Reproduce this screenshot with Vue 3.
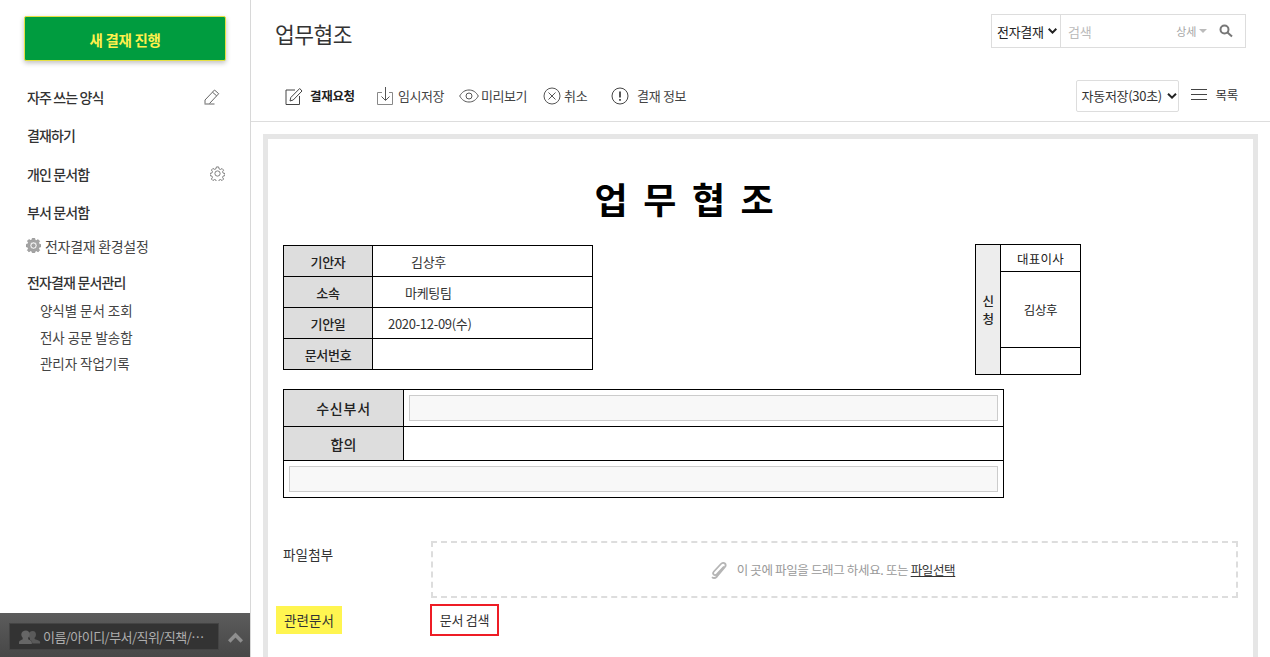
<script setup>
const nav = [
  { label: '자주 쓰는 양식', icon: 'pen' },
  { label: '결재하기' },
  { label: '개인 문서함', icon: 'gear' },
  { label: '부서 문서함' }
]
const subs = ['양식별 문서 조회', '전사 공문 발송함', '관리자 작업기록']
const info = [
  ['기안자', '김상후', 'c1'],
  ['소속', '마케팅팀', 'c2'],
  ['기안일', '2020-12-09(수)', 'c3'],
  ['문서번호', '', '']
]
</script>

<template>
  <div class="app">
    <aside class="side">
      <button class="new-btn">새 결재 진행</button>
      <nav class="nav">
        <div v-for="n in nav" :key="n.label" class="nav-item">
          <span>{{ n.label }}</span>
          <svg v-if="n.icon === 'pen'" class="pen" width="16" height="16" viewBox="0 0 16 16" fill="none" stroke="#666" stroke-width="1">
            <path d="M.5 15h10M1 14.500V11L10.500 1l4.200 3.700L5.500 14.500M8.500 3.200l4.200 3.700" />
          </svg>
          <svg v-if="n.icon === 'gear'" class="gear" width="15" height="15" viewBox="0 0 16 16" fill="none" stroke="#777" stroke-width="1">
            <circle cx="8" cy="8" r="2.800" />
            <path d="M6.800 1h2.400l.4 2 1.500.7 1.800-1 1.600 1.700-1.100 1.700.6 1.500 2 .4v2.200l-2 .5-.6 1.400 1.100 1.800-1.600 1.600-1.800-1.100-1.500.7-.4 1.900H6.800l-.4-1.900-1.500-.7-1.800 1.100-1.600-1.600 1.100-1.800-.6-1.400-2-.5V7.900l2-.4.6-1.500L1.500 4.300l1.600-1.700 1.800 1 1.500-.7z" />
          </svg>
        </div>
      </nav>
      <div class="env">
        <svg width="15" height="15" viewBox="0 0 16 16" fill="#a4a4a4" stroke="#888" stroke-width=".5">
          <path fill-rule="evenodd" d="M6.800 0h2.400l.4 2 1.500.7 1.800-1 1.700 1.700-1.100 1.700.6 1.500 1.900.4v2.400l-1.900.5-.6 1.400 1.100 1.800-1.700 1.700-1.800-1.100-1.500.6-.4 1.900H6.800l-.4-1.900-1.500-.6-1.800 1.100-1.700-1.700 1.100-1.800-.6-1.400L0 9.200V6.800l1.900-.4.6-1.500-1.100-1.700 1.700-1.700 1.800 1 1.500-.7zM8 4.300a3.700 3.700 0 1 0 0 7.400 3.700 3.700 0 0 0 0-7.400zM8 6a2 2 0 1 1 0 4 2 2 0 0 1 0-4z" />
        </svg>
        <span>전자결재 환경설정</span>
      </div>
      <div class="nav-item manage">전자결재 문서관리</div>
      <div class="subs">
        <div v-for="s in subs" :key="s" class="sub">{{ s }}</div>
      </div>
      <div class="side-foot">
        <div class="who">
          <svg width="22" height="16" viewBox="0 0 24 16" fill="#5a5a5a">
            <path d="M15 1.500c2.300 0 3.500 1.500 3.500 3.700 0 1.500-.6 2.800-1.500 3.600v1.400c1 .8 5.500 1.200 6 3.300v1.500H14.500c0-2-1-3-2.500-3.800V9.500c-1-1.200-1.500-2.600-1.500-4.300 0-2.200 2-3.700 4.500-3.700z" />
            <path d="M7.500 1C10 1 11.500 2.700 11.500 5c0 1.600-.6 3-1.500 3.800v1.700c1 .8 4 1.400 4 3.500v1.500H0V14c0-2.100 3-2.700 4-3.500V8.800C3.100 8 2.500 6.600 2.500 5c0-2.300 2.500-4 5-4z" fill="#666" />
          </svg>
          <span>이름/아이디/부서/직위/직책/⋯</span>
        </div>
        <svg class="chev" width="15" height="11" viewBox="0 0 15 11" fill="none" stroke="#8f8f8f" stroke-width="3.500">
          <path d="M1.200 9.500L7.500 3l6.300 6.500" />
        </svg>
      </div>
    </aside>

    <main class="main">
      <header class="head">
        <div class="title-row">
          <h1>업무협조</h1>
          <div class="search">
            <div class="search-sel">전자결재<svg width="9" height="6" viewBox="0 0 9 6" fill="none" stroke="#222" stroke-width="2"><path d="M.7.8l3.800 3.800L8.300.8" /></svg></div>
            <div class="search-in">
              <span class="ph">검색</span>
              <span class="more">상세<i></i></span>
              <svg width="14" height="14" viewBox="0 0 14 14" fill="none" stroke="#777" stroke-width="2"><circle cx="5.500" cy="5.500" r="4" /><path d="M8.500 8.500l4.500 4" /></svg>
            </div>
          </div>
        </div>
        <div class="tool-row">
          <div class="tools">
            <div class="tool strong t1">
              <svg width="18" height="18" viewBox="0 0 18 18" fill="none" stroke="#444"><path d="M14.500 9v8.500H1V3h9" /><path d="M5 14l.8-3.500L14.700 1.500 17 4 8.200 13z" /></svg>
              <span>결재요청</span>
            </div>
            <div class="tool t2">
              <svg width="20" height="20" viewBox="0 0 20 20" fill="none" stroke="#555"><path d="M6 6.500H1.500v12h15v-12H13" stroke="#888" /><path d="M9.500 1v13M5.500 10.500l4 4 4-4" /></svg>
              <span>임시저장</span>
            </div>
            <div class="tool t3">
              <svg width="20" height="14" viewBox="0 0 20 14" fill="none" stroke="#555"><path d="M.7 7C3 3 6 1 10 1s7 2 9.300 6c-2.300 4-5.300 6-9.300 6S3 11 .7 7z" /><circle cx="10" cy="7" r="3" /></svg>
              <span>미리보기</span>
            </div>
            <div class="tool t4">
              <svg width="18" height="18" viewBox="0 0 18 18" fill="none" stroke="#555"><circle cx="9" cy="9" r="8" /><path d="M5.500 5.500l7 7M12.500 5.500l-7 7" /></svg>
              <span>취소</span>
            </div>
            <div class="tool t5">
              <svg width="18" height="18" viewBox="0 0 18 18" fill="none" stroke="#444"><circle cx="9" cy="9" r="8" /><path d="M9 4.500v6" stroke-width="1.800" /><path d="M9 12v1.800" stroke-width="1.800" /></svg>
              <span>결재 정보</span>
            </div>
          </div>
          <div class="tools-right">
            <div class="autosave">자동저장(30초)<svg width="10" height="6" viewBox="0 0 10 6" fill="none" stroke="#222" stroke-width="2"><path d="M1 .8l4 3.800L9 .8" /></svg></div>
            <div class="list-btn">
              <svg width="16" height="12" viewBox="0 0 16 12" stroke="#444" fill="none"><path d="M0 .5h16M0 5.500h16M0 10.500h16" /></svg>
              <span>목록</span>
            </div>
          </div>
        </div>
      </header>

      <div class="body">
        <section class="doc">
          <h2>업 무 협 조</h2>
          <div class="top-tables">
            <table class="info">
              <tbody>
                <tr v-for="r in info" :key="r[0]">
                  <th>{{ r[0] }}</th>
                  <td><span :class="r[2]">{{ r[1] }}</span></td>
                </tr>
              </tbody>
            </table>
            <table class="sign">
              <tbody>
                <tr><th rowspan="3">신<br />청</th><td class="s1">대표이사</td></tr>
                <tr><td class="s2">김상후</td></tr>
                <tr><td class="s3"></td></tr>
              </tbody>
            </table>
          </div>
          <table class="recv">
            <tbody>
              <tr class="r1"><th>수신부서</th><td><div class="field"></div></td></tr>
              <tr class="r2"><th>합의</th><td></td></tr>
              <tr class="r3"><td colspan="2"><div class="field"></div></td></tr>
            </tbody>
          </table>
          <div class="attach">
            <label>파일첨부</label>
            <div class="drop">
              <svg width="16" height="18" viewBox="0 0 16 18" fill="none" stroke="#b5b5b5" stroke-width="1.800"><path d="M13.500 5.500L6.200 13.300c-1 1-2.300 1-3 .2-.8-.8-.7-2 .2-3l7-7.500c1.300-1.400 3-1.500 4-.5s.8 2.700-.4 4L6.500 15.500c-1.700 1.700-3.700 1.800-5 .6" transform="translate(-.5 0)" /></svg>
              <span>이 곳에 파일을 드래그 하세요. 또는 <u>파일선택</u></span>
            </div>
          </div>
          <div class="rel">
            <label>관련문서</label>
            <div class="rel-btn">문서 검색</div>
          </div>
        </section>
      </div>
    </main>
  </div>
</template>

<style>
html, body { margin: 0; height: 100%; overflow: hidden; background: #fff; }
</style>

<style scoped>
.app {
  display: flex;
  width: 1270px;
  height: 657px;
  overflow: hidden;
  font-family: "Noto Sans CJK KR", "Noto Sans", sans-serif;
  font-size: 13px;
  color: #333;
  letter-spacing: -0.3px;
}
.side {
  position: relative;
  width: 250px;
  flex: none;
  border-right: 1px solid #d8d8d8;
  padding-top: 16px;
}
.new-btn {
  display: block;
  width: 202px;
  height: 45px;
  margin-left: 24px;
  padding: 2px 0 0;
  background: #009c3f;
  border: 1px solid #e6e042;
  border-radius: 2px;
  color: #fff04d;
  font: bold 14.500px "Noto Sans CJK KR", sans-serif;
  letter-spacing: -0.3px;
  box-shadow: 0 2px 5px rgba(0, 0, 0, .25);
}
.nav { margin-top: 17px; }
.nav-item {
  display: flex;
  justify-content: space-between;
  align-items: center;
  height: 38.300px;
  padding-left: 27px;
  font-size: 14px;
  font-weight: 500;
  color: #333;
  letter-spacing: -0.9px;
}
.pen { margin-right: 30px; }
.gear { margin-right: 25px; }
.env {
  display: flex;
  align-items: center;
  gap: 4px;
  height: 29px;
  padding-left: 26px;
  font-size: 14px;
  color: #444;
}
.manage { margin-top: 4px; height: 36px; letter-spacing: -0.85px; }
.subs { padding-left: 40px; margin-top: -3px; }
.sub { height: 26.500px; line-height: 26.500px; font-size: 13.500px; color: #444; letter-spacing: -0.05px; }
.side-foot {
  position: absolute;
  left: 0;
  bottom: 0;
  width: 250px;
  height: 44px;
  background: linear-gradient(#5c5c5c, #474747);
  display: flex;
  align-items: center;
}
.who {
  display: flex;
  align-items: center;
  gap: 2px;
  width: 210px;
  height: 27px;
  margin: 3px 0 0 9px;
  padding-left: 9px;
  box-sizing: border-box;
  background: #333;
  border: 1px solid #444;
  color: #aeaeae;
  font-size: 13px;
  letter-spacing: -0.55px;
  white-space: nowrap;
}
.chev { margin: 5px 0 0 9px; }

.main { flex: 1; min-width: 0; }
.head { height: 121px; border-bottom: 1px solid #ddd; }
.title-row {
  display: flex;
  justify-content: space-between;
  height: 71px;
  padding: 14px 24px 0 24px;
  box-sizing: border-box;
}
h1 { margin: 5px 0 0; font-size: 21.500px; font-weight: 400; color: #333; line-height: 30px; letter-spacing: -0.5px; }
.search {
  display: flex;
  width: 255px;
  height: 34px;
  border: 1px solid #ddd;
  box-sizing: border-box;
}
.search-sel {
  display: flex;
  align-items: center;
  gap: 4px;
  width: 69px;
  padding-left: 5px;
  box-sizing: border-box;
  border-right: 1px solid #ddd;
  color: #222;
}
.search-in { flex: 1; display: flex; align-items: center; padding: 0 12px 0 7px; color: #bbb; }
.ph { flex: 1; font-size: 13px; }
.more { font-size: 11px; color: #a5a5a5; margin-right: 12px; display: flex; align-items: center; gap: 3px; }
.more i { border: 4px solid transparent; border-top: 4px solid #bbb; border-bottom: 0; }
.tool-row { display: flex; justify-content: space-between; padding: 0 32px 0 34px; height: 49px; align-items: flex-start; }
.tools { display: flex; height: 49px; align-items: center; }
.tool { display: flex; align-items: center; color: #444; font-size: 13px; }
.tool.strong { font-weight: 700; color: #222; font-size: 12.500px; }
.t1 { gap: 7px; width: 91px; }
.t2 { gap: 2px; width: 83px; letter-spacing: -0.5px; }
.t3 { gap: 2px; width: 84px; letter-spacing: -0.5px; }
.t4 { gap: 3px; width: 68px; }
.t5 { gap: 8px; }
.tools-right { display: flex; align-items: center; height: 49px; }
.autosave {
  display: flex;
  align-items: center;
  gap: 5px;
  width: 103px;
  height: 32px;
  box-sizing: border-box;
  padding-left: 5px;
  border: 1px solid #ddd;
  border-radius: 2px;
  color: #333;
  white-space: nowrap;
}
.list-btn { display: flex; align-items: center; gap: 9px; margin: -2px 0 0 12px; font-size: 12.500px; color: #333; }

.body { padding: 12px 12px 0 12px; }
.doc {
  width: 995px;
  height: 540px;
  box-sizing: border-box;
  border: 5px solid #e6e6e6;
  padding: 0 15px;
}
h2 {
  margin: 0;
  padding-top: 35px;
  width: 806px;
  height: 105px;
  box-sizing: border-box;
  text-align: center;
  font-size: 36px;
  font-weight: 700;
  line-height: 48px;
  color: #000;
  font-family: "Noto Sans CJK KR", sans-serif;
  letter-spacing: 3.700px;
}
.top-tables { display: flex; align-items: flex-start; height: 145px; }
table { border-collapse: collapse; table-layout: fixed; color: #222; }
.info { width: 310px; margin-top: 1px; }
.info th, .info td { border: 1px solid #000; height: 31px; padding: 0; box-sizing: border-box; font-size: 13px; }
.info th { width: 89px; background: #ddd; font-weight: 500; color: #222; }
.info td { font-weight: 400; color: #333; }
.c1 { padding-left: 38px; }
.c2 { padding-left: 32px; }
.c3 { padding-left: 15px; }
.sign { width: 106px; margin-left: 382px; font-size: 12.500px; }
.sign th, .sign td { border: 1px solid #000; padding: 0; text-align: center; }
.sign th { width: 24px; background: #ededed; font-size: 12.500px; font-weight: 500; line-height: 18px; }
.sign td { font-weight: 400; }
.s1 { height: 26px; letter-spacing: 0.2px; }
.s2 { height: 75px; }
.s3 { height: 26px; }
.recv { width: 721px; }
.recv th, .recv td { border: 1px solid #000; padding: 0; }
.recv th { width: 119px; background: #ddd; font-size: 14px; letter-spacing: 0.2px; font-weight: 500; color: #222; }
.r1 th { letter-spacing: 0.8px; }
.r1 th, .r1 td { height: 36px; }
.r2 th, .r2 td { height: 33px; }
.r3 td { height: 36px; }
.field { height: 26px; margin: 0 5px; box-sizing: border-box; border: 1px solid #ccc; background: #f8f8f8; }
.attach { display: flex; margin-top: 43px; height: 63px; }
.attach label { width: 148px; line-height: 26px; color: #333; font-size: 13.500px; letter-spacing: 0.2px; }
.drop {
  width: 807px;
  height: 57px;
  box-sizing: border-box;
  border: 2px dashed #ddd;
  padding-right: 3px;
  display: flex;
  align-items: center;
  justify-content: center;
  gap: 10px;
  font-size: 12.500px;
  letter-spacing: -0.35px;
  color: #999;
}
.drop u { color: #333; }
.rel { display: flex; align-items: center; margin-left: -7px; }
.rel label {
  width: 66px;
  height: 28px;
  line-height: 28px;
  text-align: center;
  background: #fff550;
  color: #333;
  font-size: 13.500px;
  letter-spacing: 0.1px;
}
.rel-btn {
  margin-left: 88px;
  width: 69px;
  height: 32px;
  line-height: 28px;
  text-align: center;
  box-sizing: border-box;
  border: 2px solid #ee1c25;
  color: #333;
}
</style>
